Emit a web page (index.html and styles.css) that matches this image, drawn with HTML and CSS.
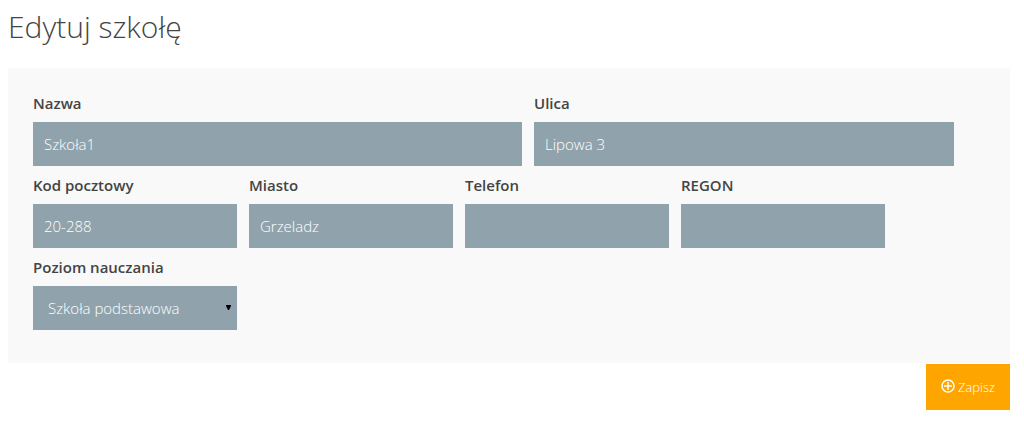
FILE: index.html
```html
<!DOCTYPE html>
<html lang="pl">

<head>
    <meta charset="UTF-8">
    <meta name="viewport" content="width=device-width, initial-scale=1.0">
    <title>Edytuj szkołę</title>
    <link rel="stylesheet" href="styles.css">
</head>

<body>
    <h1 class="title">Edytuj szkołę</h1>
    <form class="school-form">
        <div class="panel">
            <div class="row row-wide">
                <div class="field">
                    <label for="name">Nazwa</label>
                    <input type="text" id="name" name="name" value="Szkoła1">
                </div>
                <div class="field">
                    <label for="street">Ulica</label>
                    <input type="text" id="street" name="street" value="Lipowa 3">
                </div>
            </div>
            <div class="row">
                <div class="field">
                    <label for="postcode">Kod pocztowy</label>
                    <input type="text" id="postcode" name="postcode" value="20-288">
                </div>
                <div class="field">
                    <label for="city">Miasto</label>
                    <input type="text" id="city" name="city" value="Grzeladz">
                </div>
                <div class="field">
                    <label for="phone">Telefon</label>
                    <input type="text" id="phone" name="phone">
                </div>
                <div class="field">
                    <label for="regon">REGON</label>
                    <input type="text" id="regon" name="regon">
                </div>
            </div>
            <div class="row">
                <div class="field">
                    <label for="level">Poziom nauczania</label>
                    <div class="select">
                        <select id="level" name="level">
                            <option>Szkoła podstawowa</option>
                        </select>
                        <svg class="arrow" viewBox="0 0 5 5" aria-hidden="true"><path d="M0 0h5v1L3 5H2L0 1z"/></svg>
                    </div>
                </div>
            </div>
        </div>
        <div class="actions">
            <button type="submit" class="save">
                <svg class="icon" viewBox="0 0 14 14" aria-hidden="true">
                    <circle cx="7" cy="7" r="6"/>
                    <path d="M7 3v8M3 7h8"/>
                </svg>
                Zapisz
            </button>
        </div>
    </form>
</body>

</html>
```
FILE: styles.css
```css
* {
    box-sizing: border-box;
}

body {
    margin: 0;
    padding: 4px 14px 14px 8px;
    background: #fff;
    color: #444;
    font-family: "Open Sans", "Noto Sans", sans-serif;
    font-size: 15px;
}

.title {
    margin: 0 0 18px;
    color: #444;
    font-size: 30px;
    font-weight: 300;
    line-height: 46px;
}

.panel {
    padding: 24px 25px 33px;
    background: #f9f9f9;
}

.row {
    display: grid;
    grid-template-columns: repeat(4, 51fr) 22fr;
    column-gap: 12px;
    margin-bottom: 8px;
}

.row:last-child {
    margin-bottom: 0;
}

.row-wide {
    grid-template-columns: 489fr 420fr 19fr;
}

.field {
    min-width: 0;
}

.field label {
    display: block;
    margin-bottom: 8px;
    font-size: 15px;
    font-weight: 600;
    line-height: 22px;
}

.field input,
.field select {
    display: block;
    width: 100%;
    height: 44px;
    margin: 0;
    padding: 0 11px;
    border: 0;
    border-radius: 0;
    background: #90a3ac;
    color: #fff;
    font-family: inherit;
    font-size: 15px;
    font-weight: 300;
}

.field select {
    appearance: none;
    padding: 0 15px;
}

.select {
    position: relative;
}

.arrow {
    position: absolute;
    top: 19px;
    right: 6px;
    width: 5px;
    height: 5px;
    fill: #000;
    pointer-events: none;
}

.actions {
    display: flex;
    justify-content: flex-end;
    margin-top: 1px;
}

.save {
    display: flex;
    align-items: center;
    gap: 3px;
    height: 46px;
    padding: 0 15px;
    border: 0;
    background: #ffa500;
    color: #fff;
    font-family: inherit;
    font-size: 13px;
    font-weight: 300;
    cursor: pointer;
}

.icon {
    width: 14px;
    height: 14px;
    margin-bottom: 3px;
    fill: none;
    stroke: #fff;
    stroke-width: 1.5;
}
```
